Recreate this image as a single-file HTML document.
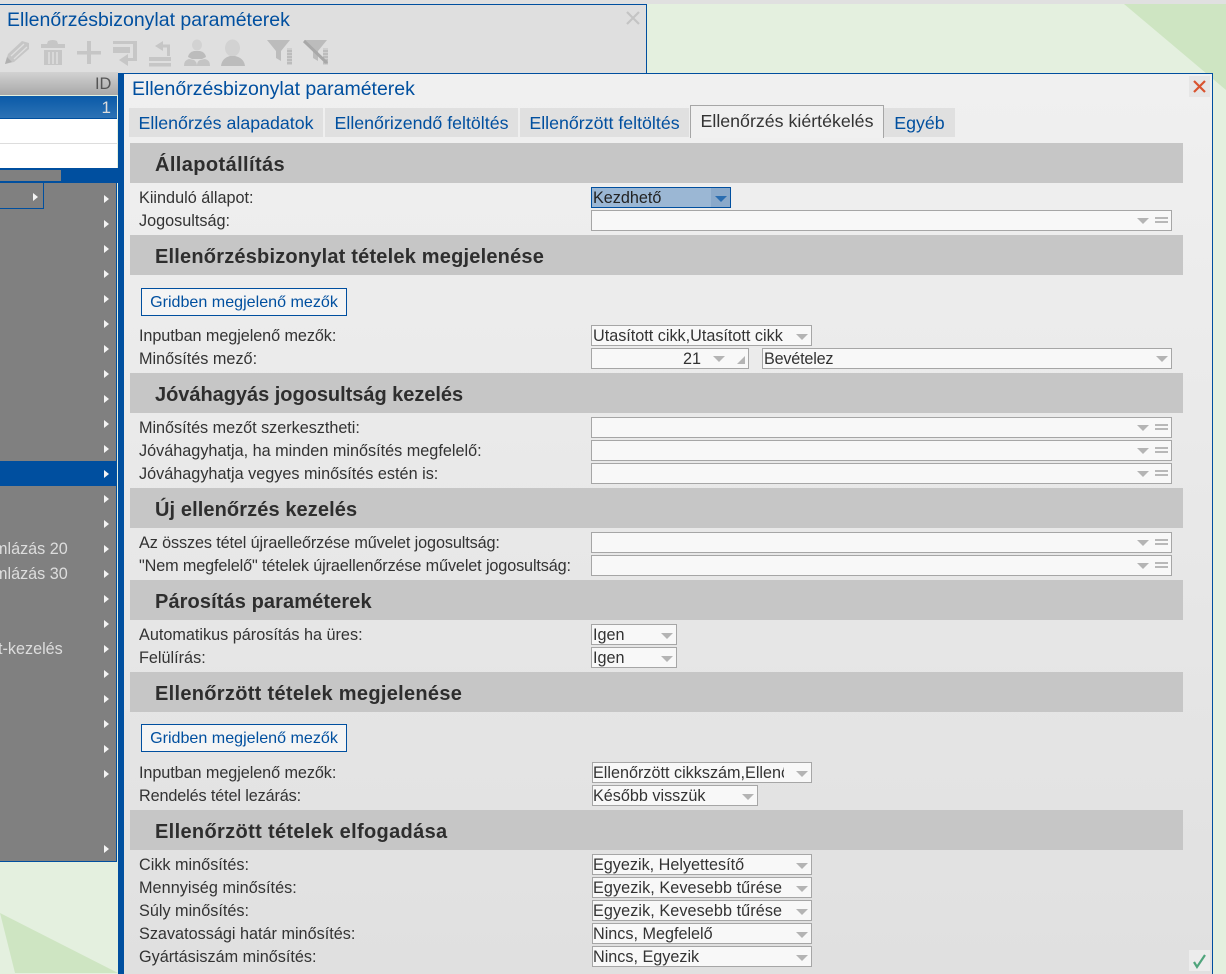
<!DOCTYPE html>
<html lang="hu"><head><meta charset="utf-8"><title>Ellenőrzésbizonylat paraméterek</title>
<style>
html,body{margin:0;padding:0;width:1226px;height:973px;overflow:hidden;background:#e4f0df;font-family:"Liberation Sans",sans-serif;color:#333}
.a{position:absolute;white-space:nowrap}
#bg{left:0;top:0}
#top{left:0;top:0;width:1226px;height:4px;background:#e0e0e0}
#win{left:0;top:4px;width:646px;height:68px;background:#dfdfdf;border-top:1px solid #004f9f;border-right:1px solid #004f9f;border-bottom:1px solid #004f9f}
.t1{font-size:19.5px;color:#004f9f;line-height:22px}
#gh{left:0;top:72px;width:118px;height:23px;background:linear-gradient(#d2d2d2,#a8a8a8)}
#gs{left:0;top:96px;width:117px;height:22px;background:linear-gradient(#0a5aa8,#2c72b5);border:0;border-bottom:1px solid #004f9f;color:#ddd;font-size:17px;line-height:24px;text-align:right}
#menu{left:0;top:183px;width:116px;height:678px;background:#808080;border-right:1px solid #004f9f;border-bottom:1px solid #004f9f;color:#e8e8e8;font-size:16px}
.ar{position:absolute;width:0;height:0;border-left:5px solid #f4f4f4;border-top:4px solid transparent;border-bottom:4px solid transparent}
.mt{position:absolute;font-size:16.2px;color:#ddd;line-height:20px}
#modal{left:118px;top:73px;width:1088px;height:900px;border-left:6px solid #004f9f;border-top:1px solid #004f9f;border-right:1px solid #004f9f;background:linear-gradient(#f0f0f0,#e0e0e0)}
.bar{position:absolute;left:130px;width:1053px;height:40px;background:#c6c6c6;font-weight:bold;font-size:20px;line-height:44px;color:#2e2e2e;text-indent:25px;letter-spacing:.2px;overflow:hidden}
.tab{position:absolute;top:108px;height:29px;background:#e0e0e0;color:#004f9f;font-size:17.8px;line-height:31px;text-align:center}
.lb{position:absolute;left:139px;font-size:16.23px;line-height:24px;color:#333;white-space:nowrap;margin-top:-1px}
.i{position:absolute;height:19px;border:1px solid #a6a6a6;background:#f8f8f8;box-sizing:content-box;font-size:16.2px;line-height:21px;color:#333;overflow:hidden;white-space:nowrap;padding-left:1px}
.n{padding-left:0}
.d{position:absolute;width:0;height:0;border-top:6px solid #b4b4b4;border-left:6px solid transparent;border-right:6px solid transparent}
.h{position:absolute;width:13px;height:2px;border-top:2px solid #b8b8b8;border-bottom:2px solid #b8b8b8}
.btn{position:absolute;left:141px;width:204px;height:26px;border:1px solid #004f9f;background:#f4f4f4;color:#004f9f;font-size:16.1px;line-height:27px;text-align:center}
</style></head><body>
<svg id="bg" class="a" width="1226" height="973"><polygon points="1124,4 1226,4 1226,90" fill="#cee5c2"/><polygon points="0,913 118,973 15,973" fill="#cee5c2"/></svg>
<div id="top" class="a"></div>
<div id="win" class="a"></div>
<div class="a t1" style="left:7px;top:9px">Ellenőrzésbizonylat paraméterek</div>
<svg class="a" style="left:625px;top:10px" width="16" height="16"><path d="M2 2L14 14M14 2L2 14" stroke="#c4c4c4" stroke-width="2.2"/></svg>
<svg class="a" style="left:0;top:36px" width="340" height="36" fill="#c6c6c6">
<path d="M5 28L8 18 22 5 29 7V13L14 26z"/><path d="M11 20L24 8M14 23L27 11" stroke="#dfdfdf" stroke-width="1.3"/><path d="M5 28L7 21 12 26z" fill="#b0b0b0"/>
<path d="M41 8h6l1-3q5-2 9 0l1 3h7v4H41zM44 14h18v15H44z"/><path d="M49 16v12M53 16v12M57 16v12" stroke="#dfdfdf" stroke-width="1.5"/>
<path d="M77 15h10V5h4v10h10v3.500H91V28h-4V18.500H77z" />
<path d="M113 5h24v3h-24zM113 11h17v6h-17z"/><path d="M133 5h4v20h-11v-3h7z"/><path d="M119 24l9-6v12z"/>
<path d="M149 21h22v4h-22zM149 27h22v3.500h-22z"/><path d="M170 20V8.500h-10v3h7V20z"/><path d="M155 10l8-5v10z"/>
<path d="M192 9a5 5.500 0 1 1 10 0a5 5.500 0 1 1-10 0z" fill="#d2d2d2"/><path d="M188 21q1-5 6-6h6q5 1 6 6l-4 2h-10z" fill="#bcbcbc"/><path d="M184 30q0-6 5-7l5 1q3 2 3 6zM197 30q0-5 3-6l5-1q5 1 5 7z" fill="#c4c4c4"/>
<ellipse cx="232.500" cy="12" rx="7.500" ry="8.500" fill="#d2d2d2"/><path d="M221 30Q222 22 230 20h5Q244 22 245 30z" fill="#bcbcbc"/>
<path d="M267 4H290L281 15V25L276 22V15z" fill="#bcbcbc"/><rect x="287" y="12" width="5" height="17" fill="#cfcfcf"/><path d="M287 15h5M287 18h5M287 21h5M287 24h5M287 27h5" stroke="#a8a8a8"/>
<path d="M304 4H327L318 15V25L313 22V15z" fill="#bcbcbc"/><rect x="323" y="12" width="5" height="17" fill="#cfcfcf"/><path d="M323 15h5M323 18h5M323 21h5M323 24h5M323 27h5" stroke="#a8a8a8"/><path d="M304 5L327 27" stroke="#a8a8a8" stroke-width="3"/>
</svg>
<div id="gh" class="a"></div>
<div class="a" style="left:95px;top:74px;font-size:16.4px;line-height:20px;color:#555">ID</div>
<div id="gs" class="a"><span style="padding-right:6px">1</span></div>
<div class="a" style="left:0;top:119px;width:117px;height:24px;background:#fff;border-bottom:1px solid #ddd"></div>
<div class="a" style="left:0;top:144px;width:117px;height:24px;background:#fff"></div>
<div class="a" style="left:0;top:168px;width:118px;height:15px;background:#004f9f"></div>
<div class="a" style="left:0;top:170px;width:61px;height:11px;background:#808080"></div>
<div id="menu" class="a">
<div style="position:absolute;left:0;top:0;width:43px;height:25px;border-right:1px solid #004f9f;border-bottom:1px solid #004f9f"></div>
<div style="position:absolute;left:0;top:278px;width:116px;height:25px;background:#004f9f"></div>
<div class="mt" style="top:356px;left:-6px">mlázás 20</div>
<div class="mt" style="top:381px;left:-6px">mlázás 30</div>
<div class="mt" style="top:456px;left:-2px">t-kezelés</div>
<i class="ar" style="left:33px;top:10px"></i>
<i class="ar" style="left:104px;top:12px"></i><i class="ar" style="left:104px;top:37px"></i><i class="ar" style="left:104px;top:62px"></i><i class="ar" style="left:104px;top:87px"></i><i class="ar" style="left:104px;top:112px"></i><i class="ar" style="left:104px;top:137px"></i><i class="ar" style="left:104px;top:162px"></i><i class="ar" style="left:104px;top:187px"></i><i class="ar" style="left:104px;top:212px"></i><i class="ar" style="left:104px;top:237px"></i><i class="ar" style="left:104px;top:262px"></i><i class="ar" style="left:104px;top:287px"></i><i class="ar" style="left:104px;top:312px"></i><i class="ar" style="left:104px;top:337px"></i><i class="ar" style="left:104px;top:362px"></i><i class="ar" style="left:104px;top:387px"></i><i class="ar" style="left:104px;top:412px"></i><i class="ar" style="left:104px;top:437px"></i><i class="ar" style="left:104px;top:462px"></i><i class="ar" style="left:104px;top:487px"></i><i class="ar" style="left:104px;top:512px"></i><i class="ar" style="left:104px;top:537px"></i><i class="ar" style="left:104px;top:562px"></i><i class="ar" style="left:104px;top:587px"></i><i class="ar" style="left:104px;top:662px"></i>
</div>
<div id="modal" class="a"></div>
<div class="a t1" style="left:132px;top:78px">Ellenőrzésbizonylat paraméterek</div>
<svg class="a" style="left:1189px;top:76px" width="21" height="21"><rect width="21" height="21" fill="#e6e6e6"/><path d="M5 5L16 16M16 5L5 16" stroke="#d9532f" stroke-width="2.2"/></svg>
<div class="tab" style="left:129px;width:194px">Ellenőrzés alapadatok</div>
<div class="tab" style="left:325px;width:193px">Ellenőrizendő feltöltés</div>
<div class="tab" style="left:520px;width:169px">Ellenőrzött feltöltés</div>
<div class="tab" style="left:690px;width:192px;top:105px;height:32px;background:#f0f0f0;color:#333;border:1px solid #a6a6a6;border-bottom:0;line-height:31px">Ellenőrzés kiértékelés</div>
<div class="tab" style="left:884px;width:71px">Egyéb</div>

<div class="bar" style="top:143px;letter-spacing:.4px">Állapotállítás</div>
<div class="bar" style="top:235px">Ellenőrzésbizonylat tételek megjelenése</div>
<div class="bar" style="top:373px;letter-spacing:-.03px">Jóváhagyás jogosultság kezelés</div>
<div class="bar" style="top:488px;letter-spacing:.1px">Új ellenőrzés kezelés</div>
<div class="bar" style="top:580px;letter-spacing:.1px">Párosítás paraméterek</div>
<div class="bar" style="top:672px;letter-spacing:.3px">Ellenőrzött tételek megjelenése</div>
<div class="bar" style="top:810px;letter-spacing:.34px">Ellenőrzött tételek elfogadása</div>

<div class="lb" style="top:187px">Kiinduló állapot:</div>
<div class="i" style="left:591px;top:187px;width:137px;background:#9bb7d4;border:1px solid #004f9f;color:#222">Kezdhető<b style="position:absolute;right:0;top:0;width:19px;height:19px;background:#8aa9ca"></b><i class="d" style="left:123px;top:8px;border-top-color:#2a6db0"></i></div>
<div class="lb" style="top:210px">Jogosultság:</div>
<div class="i" style="left:591px;top:210px;width:578px"><i class="d" style="left:545px;top:7px"></i><i class="h" style="left:563px;top:6px"></i></div>

<div class="btn" style="top:288px">Gridben megjelenő mezők</div>
<div class="lb" style="top:325px;letter-spacing:-.08px">Inputban megjelenő mezők:</div>
<div class="i" style="left:591px;top:325px;width:218px">Utasított cikk,Utasított cikk<i class="d" style="left:204px;top:8px"></i></div>
<div class="lb" style="top:348px">Minősítés mező:</div>
<div class="i" style="left:591px;top:348px;width:155px"><span style="position:absolute;right:47px;top:0">21</span><i class="d" style="left:121px;top:7px"></i><svg style="position:absolute;left:144px;top:6px" width="10" height="10"><path d="M9 1V9H1z" fill="#b4b4b4"/></svg></div>
<div class="i" style="left:762px;top:348px;width:407px;letter-spacing:-.2px">Bevételez<i class="d" style="left:393px;top:7px"></i></div>

<div class="lb" style="top:417px;letter-spacing:-.03px">Minősítés mezőt szerkesztheti:</div>
<div class="i" style="left:591px;top:417px;width:578px"><i class="d" style="left:545px;top:7px"></i><i class="h" style="left:563px;top:6px"></i></div>
<div class="lb" style="top:440px">Jóváhagyhatja, ha minden minősítés megfelelő:</div>
<div class="i" style="left:591px;top:440px;width:578px"><i class="d" style="left:545px;top:7px"></i><i class="h" style="left:563px;top:6px"></i></div>
<div class="lb" style="top:463px">Jóváhagyhatja vegyes minősítés estén is:</div>
<div class="i" style="left:591px;top:463px;width:578px"><i class="d" style="left:545px;top:7px"></i><i class="h" style="left:563px;top:6px"></i></div>

<div class="lb" style="top:532px;letter-spacing:-.12px">Az összes tétel újraelleőrzése művelet jogosultság:</div>
<div class="i" style="left:591px;top:532px;width:578px"><i class="d" style="left:545px;top:7px"></i><i class="h" style="left:563px;top:6px"></i></div>
<div class="lb" style="top:555px;letter-spacing:-.13px">"Nem megfelelő" tételek újraellenőrzése művelet jogosultság:</div>
<div class="i" style="left:591px;top:555px;width:578px"><i class="d" style="left:545px;top:7px"></i><i class="h" style="left:563px;top:6px"></i></div>

<div class="lb" style="top:624px">Automatikus párosítás ha üres:</div>
<div class="i" style="left:591px;top:624px;width:83px">Igen<i class="d" style="left:69px;top:8px"></i></div>
<div class="lb" style="top:647px">Felülírás:</div>
<div class="i" style="left:591px;top:647px;width:83px">Igen<i class="d" style="left:69px;top:8px"></i></div>

<div class="btn" style="top:724px">Gridben megjelenő mezők</div>
<div class="lb" style="top:762px;letter-spacing:-.08px">Inputban megjelenő mezők:</div>
<div class="i n" style="left:592px;top:762px;width:218px">Ellenőrzött cikkszám,Ellenő<b style="position:absolute;right:0;top:0;width:27px;height:19px;background:#f8f8f8"></b><i class="d" style="left:203px;top:8px"></i></div>
<div class="lb" style="top:785px;letter-spacing:-.13px">Rendelés tétel lezárás:</div>
<div class="i n" style="left:592px;top:785px;width:164px">Később visszük<i class="d" style="left:149px;top:8px"></i></div>

<div class="lb" style="top:854px">Cikk minősítés:</div>
<div class="i n" style="left:592px;top:854px;width:218px">Egyezik, Helyettesítő<i class="d" style="left:203px;top:8px"></i></div>
<div class="lb" style="top:877px;letter-spacing:.05px">Mennyiség minősítés:</div>
<div class="i n" style="left:592px;top:877px;width:218px;letter-spacing:.08px">Egyezik, Kevesebb tűrése<i class="d" style="left:203px;top:8px"></i></div>
<div class="lb" style="top:900px">Súly minősítés:</div>
<div class="i n" style="left:592px;top:900px;width:218px;letter-spacing:.08px">Egyezik, Kevesebb tűrése<i class="d" style="left:203px;top:8px"></i></div>
<div class="lb" style="top:923px">Szavatossági határ minősítés:</div>
<div class="i n" style="left:592px;top:923px;width:218px">Nincs, Megfelelő<i class="d" style="left:203px;top:8px"></i></div>
<div class="lb" style="top:946px">Gyártásiszám minősítés:</div>
<div class="i n" style="left:592px;top:946px;width:218px">Nincs, Egyezik<i class="d" style="left:203px;top:8px"></i></div>

<svg class="a" style="left:1189px;top:950px" width="21" height="21"><rect width="21" height="21" fill="#ececec"/><path d="M5 12l3 5 8-12" fill="none" stroke="#4fa47c" stroke-width="2.2"/></svg>
</body></html>
